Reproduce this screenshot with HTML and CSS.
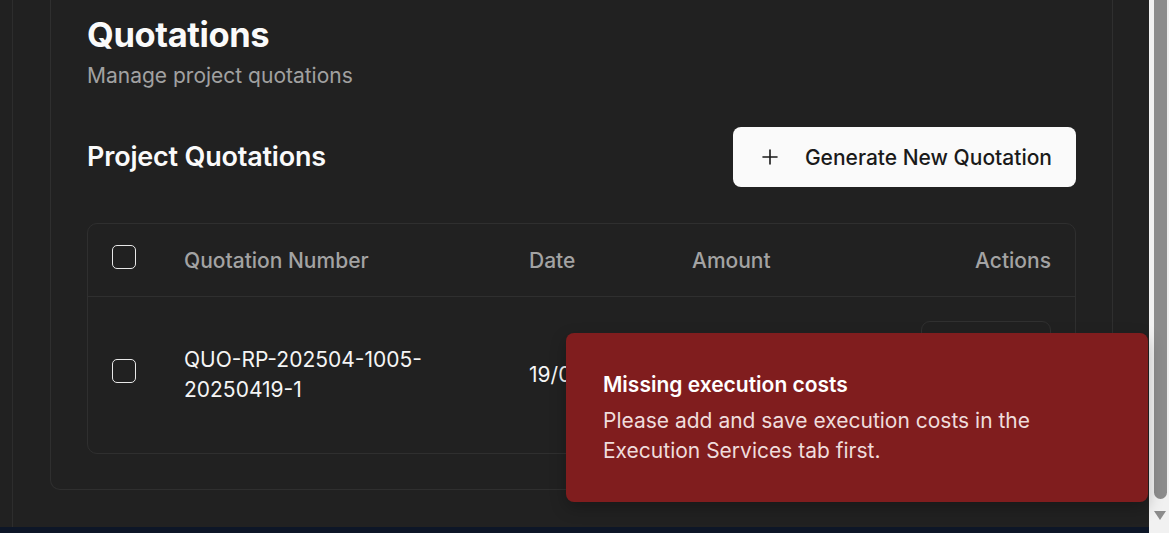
FILE: index.html
```html
<!DOCTYPE html>
<html lang="en">
<head>
<meta charset="utf-8">
<title>Quotations</title>
<link rel="stylesheet" href="styles.css">
</head>
<body>
<div class="app">
  <div class="main">
    <div class="content">
      <div class="rail"></div>
      <div class="shell">
        <div class="card">
          <h1 class="title">Quotations</h1>
          <p class="subtitle">Manage project quotations</p>

          <div class="section-head">
            <h2 class="section-title">Project Quotations</h2>
            <button class="btn-primary">
              <svg class="plus" width="16" height="16" viewBox="0 0 16 16" fill="none" stroke="currentColor" stroke-width="1.6" stroke-linecap="round"><path d="M8 1v14M1 8h14"/></svg>
              <span>Generate New Quotation</span>
            </button>
          </div>

          <div class="table">
            <div class="row head">
              <div class="cell"><span class="checkbox"></span></div>
              <div class="cell">Quotation Number</div>
              <div class="cell">Date</div>
              <div class="cell">Amount</div>
              <div class="cell right">Actions</div>
            </div>
            <div class="row body">
              <div class="cell"><span class="checkbox"></span></div>
              <div class="cell qnum">QUO-RP-202504-1005-<br>20250419-1</div>
              <div class="cell">19/04/2025</div>
              <div class="cell">₹0.00</div>
              <div class="cell right">
                <div class="actions">
                  <button class="btn-outline">View</button>
                  <button class="btn-outline">Delete</button>
                </div>
              </div>
            </div>
          </div>
        </div>
      </div>
    </div>
    <div class="footer-strip"></div>
  </div>
  <div class="scrollbar">
    <div class="thumb"></div>
    <div class="arrow"></div>
  </div>

  <div class="toast">
    <div class="toast-title">Missing execution costs</div>
    <div class="toast-desc">Please add and save execution costs in the Execution Services tab first.</div>
  </div>
</div>
</body>
</html>
```

FILE: styles.css
```css
* { box-sizing: border-box; }
html, body {
  margin: 0;
  padding: 0;
  height: 100%;
  overflow: hidden;
  background: #212121;
  font-family: Inter, "Noto Sans", "Liberation Sans", sans-serif;
  color: #fafafa;
}
.app {
  position: relative;
  display: flex;
  height: 533px;
  width: 1169px;
}
.main {
  flex: 1;
  display: flex;
  flex-direction: column;
  min-width: 0;
}
.content {
  flex: 1;
  display: flex;
  min-height: 0;
}
.rail {
  width: 13px;
  border-right: 1px solid #2d2d2d;
}
.shell {
  flex: 1;
  padding: 0 36px 37px 37px;
  display: flex;
  flex-direction: column;
}
.card {
  flex: 1;
  border: 1px solid #2f2f2f;
  border-top: none;
  border-radius: 0 0 10px 10px;
  padding: 12px 36px 0 36px;
}
.title {
  margin: 0;
  font-size: 34.5px;
  line-height: 45px;
  font-weight: 700;
  letter-spacing: -0.4px;
  color: #fafafa;
}
.subtitle {
  margin: 6px 0 0 0;
  font-size: 21px;
  line-height: 26px;
  color: #a1a1a1;
}
.section-head {
  margin-top: 38px;
  display: flex;
  align-items: center;
  justify-content: space-between;
  height: 60px;
}
.section-title {
  margin: 0;
  font-size: 27px;
  line-height: 32px;
  font-weight: 600;
  letter-spacing: -0.2px;
}
.btn-primary {
  display: flex;
  align-items: center;
  gap: 27px;
  height: 60px;
  padding: 0 24px 0 29px;
  border: none;
  border-radius: 8px;
  background: #fafafa;
  color: #1a1a1a;
  font-family: inherit;
  font-size: 21px;
  font-weight: 500;
}
.plus { display: block; }
.table {
  margin-top: 36px;
  border: 1px solid #2f2f2f;
  border-radius: 10px;
}
.row {
  display: grid;
  grid-template-columns: 72px 345px 163px 1fr auto;
  align-items: center;
  padding: 0 24px;
}
.row.head {
  height: 73px;
  border-bottom: 1px solid #2f2f2f;
  color: #a3a3a3;
  font-size: 21px;
  font-weight: 500;
}
.row.body {
  height: 156px;
  font-size: 21px;
  line-height: 30px;
  color: #f5f5f5;
}
.cell.right {
  justify-self: end;
  text-align: right;
}
.checkbox {
  display: block;
  width: 24px;
  height: 24px;
  margin-bottom: 7px;
  border: 1.5px solid #e8e8e8;
  border-radius: 5px;
}
.row.body .checkbox { margin-bottom: 9px; }
.actions {
  display: flex;
  flex-direction: column;
  gap: 8px;
  margin-top: -1px;
}
.btn-outline {
  width: 130px;
  height: 50px;
  background: transparent;
  border: 1px solid #303030;
  border-radius: 9px;
  color: #fafafa;
  font-family: inherit;
  font-size: 18px;
}
.footer-strip {
  height: 6px;
  background: #0d1627;
}
.scrollbar {
  width: 20px;
  background: #f1f1f1;
  position: relative;
  display: flex;
  flex-direction: column;
  align-items: center;
}
.thumb {
  width: 13px;
  height: 499px;
  margin-left: 2px;
  background: #8c8c8c;
  border-radius: 0 0 7px 7px;
}
.arrow {
  margin-top: 12px;
  margin-left: 2px;
  width: 0;
  height: 0;
  border-left: 6px solid transparent;
  border-right: 6px solid transparent;
  border-top: 9px solid #8c8c8c;
}
.toast {
  position: absolute;
  left: 566px;
  top: 333px;
  width: 582px;
  height: 169px;
  background: #801d1e;
  border-radius: 8px;
  padding: 39px 37px 0 37px;
  box-shadow: 0 6px 16px rgba(0,0,0,0.25);
}
.toast-title {
  font-size: 21px;
  line-height: 26px;
  font-weight: 600;
  color: #ffffff;
}
.toast-desc {
  margin-top: 8px;
  font-size: 21px;
  line-height: 30px;
  color: #efdcdc;
  width: 450px;
}
```
